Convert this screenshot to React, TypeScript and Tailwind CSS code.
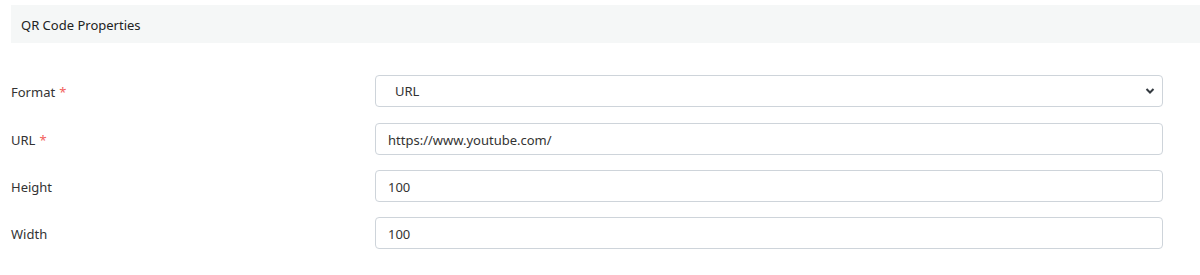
import { useState } from "react";

const font = { fontFamily: "'Noto Sans', 'Open Sans', sans-serif" };

function Label({ text, required }: { text: string; required?: boolean }) {
  return (
    <label className="w-[364px] shrink-0 pt-[4px] text-[13px] text-[#333]">
      {text}
      {required && <span className="ml-[4px] text-[#f2605c]">*</span>}
    </label>
  );
}

export default function App() {
  const [format, setFormat] = useState("URL");
  const [url, setUrl] = useState("https://www.youtube.com/");
  const [height, setHeight] = useState("100");
  const [width, setWidth] = useState("100");

  const inputCls =
    "w-[788px] h-[32px] rounded-[4px] border border-[#ced4da] bg-white px-[12px] pt-[2px] text-[13px] text-[#333] outline-none";

  return (
    <div className="bg-white h-[275px] pt-[5px] pl-[11px]" style={font}>
      {/* Section header */}
      <div className="h-[38px] bg-[#f5f7f7] flex items-center pl-[10px] pt-[4px] text-[13px] text-[#222]">
        QR Code Properties
      </div>

      <div className="mt-[32px] flex flex-col">
        <div className="flex items-center">
          <Label text="Format" required />
          <div className="relative">
            <select
              value={format}
              onChange={(e) => setFormat(e.target.value)}
              className={inputCls + " appearance-none pl-[19px]"}
            >
              <option>URL</option>
              <option>Text</option>
              <option>Email</option>
            </select>
            <svg
              className="absolute right-[8px] top-[12px] pointer-events-none"
              width="10"
              height="8"
              viewBox="0 0 10 8"
            >
              <path d="M1.5 2 L5 5.5 L8.5 2" fill="none" stroke="#343a40" strokeWidth="2" />
            </svg>
          </div>
        </div>

        <div className="flex items-center mt-[16px]">
          <Label text="URL" required />
          <input value={url} onChange={(e) => setUrl(e.target.value)} className={inputCls} />
        </div>

        <div className="flex items-center mt-[15px]">
          <Label text="Height" />
          <input value={height} onChange={(e) => setHeight(e.target.value)} className={inputCls} />
        </div>

        <div className="flex items-center mt-[15px]">
          <Label text="Width" />
          <input value={width} onChange={(e) => setWidth(e.target.value)} className={inputCls} />
        </div>
      </div>
    </div>
  );
}
